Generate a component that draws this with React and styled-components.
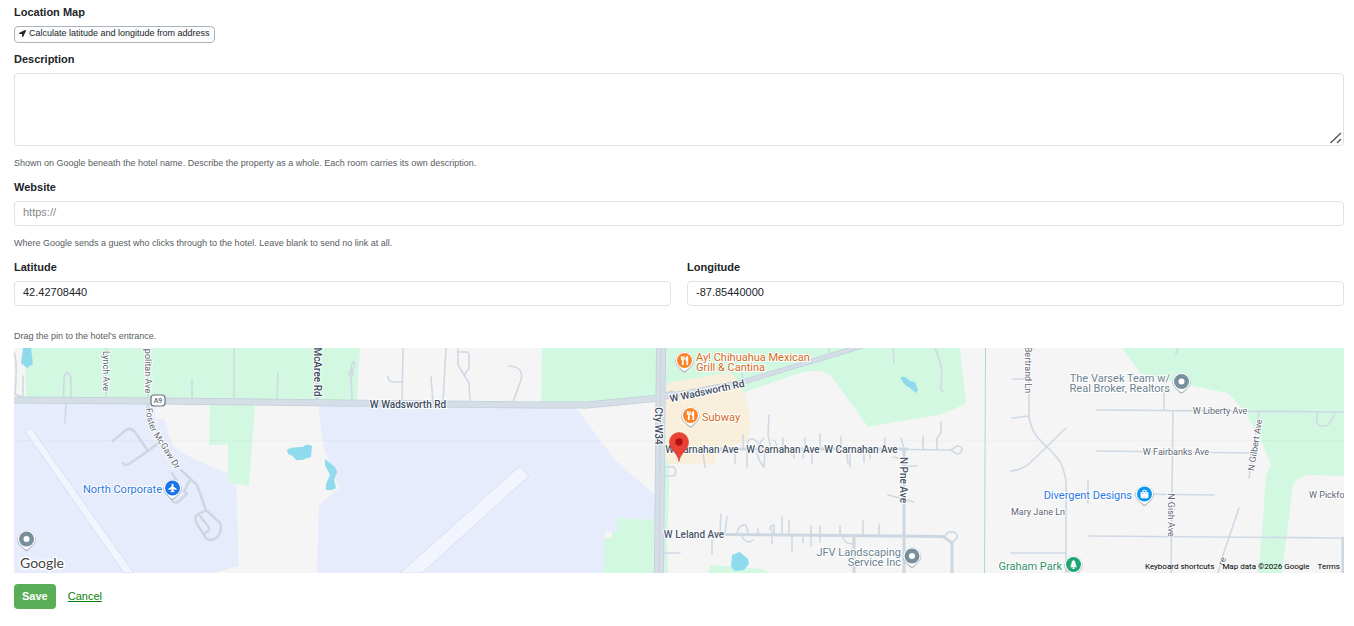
import styled, { createGlobalStyle } from 'styled-components'
import { FaLocationArrow, FaPlane, FaUtensils, FaTree, FaShoppingBag } from 'react-icons/fa'

const GlobalStyle = createGlobalStyle`
  *, *::before, *::after {
    box-sizing: border-box;
  }
  body {
    margin: 0;
    background: #fff;
    color: #212529;
    font-family: 'Liberation Sans', Arial, sans-serif;
    font-size: 11px;
    line-height: 16px;
  }
`

const Form = styled.form`
  padding: 4px 10px 16px 14px;
`

const Field = styled.div`
  display: flex;
  flex-direction: column;
  align-items: ${(props) => (props.$start ? 'flex-start' : 'stretch')};
  gap: 6px;
  flex: 1;
  margin-bottom: ${(props) => (props.$start ? '8px' : '9px')};
`

const Columns = styled.div`
  display: flex;
  gap: 16px;
`

const Label = styled.label`
  font-weight: 700;
`

const Title = styled.span`
  font-weight: 700;
`

const Help = styled.p`
  margin: ${(props) => (props.$map ? '14px 0 5px' : '4px 0 0')};
  color: #595c5f;
  font-size: 9px;
  line-height: 14px;
`

const Input = styled.input`
  width: 100%;
  height: 25px;
  padding: 2px 8px 6px;
  border: 1px solid #dee2e6;
  border-radius: 4px;
  background: #fff;
  color: #212529;
  font: inherit;
  line-height: 15px;
  &::placeholder {
    color: #85888b;
    opacity: 1;
  }
`

const TextAreaWrap = styled.div`
  position: relative;
`

const TextArea = styled.textarea`
  display: block;
  width: 100%;
  height: 73px;
  padding: 4px 8px;
  border: 1px solid #dee2e6;
  border-radius: 4px;
  font: inherit;
  resize: vertical;
  &::-webkit-resizer {
    display: none;
  }
`

const Grip = styled.svg`
  position: absolute;
  right: 2px;
  bottom: 2px;
  pointer-events: none;
`

const CalculateButton = styled.button`
  display: flex;
  align-items: center;
  gap: 3px;
  height: 17px;
  padding: 0 4px 3px;
  border: 1px solid #a9b4bf;
  border-radius: 4px;
  background: #fcfcfd;
  color: #212529;
  font: inherit;
  font-size: 9px;
  line-height: 12px;
`

const Actions = styled.div`
  display: flex;
  align-items: center;
  gap: 12px;
  margin-top: 11px;
`

const SaveButton = styled.button`
  height: 25px;
  padding: 0 8px 2px;
  border: 0;
  border-radius: 4px;
  background: #5aad57;
  color: #fff;
  font: inherit;
  font-weight: 700;
`

const CancelLink = styled.a`
  padding-bottom: 2px;
  color: #0a800a;
  text-decoration: underline;
`

const MapFrame = styled.div`
  position: relative;
  height: 225px;
  overflow: hidden;
  background: #f5f5f5;
`

const MapSvg = styled.svg`
  display: block;
  width: 100%;
  height: 100%;
  font-family: Roboto, sans-serif;
`

const MapFooter = styled.div`
  position: absolute;
  right: 0;
  bottom: 0;
  display: flex;
  gap: 8px;
  padding: 0 4px;
  color: #000;
  font-family: Roboto, sans-serif;
  font-size: 8px;
  line-height: 12px;
`

const FooterButton = styled.button`
  padding: 0;
  border: 0;
  background: none;
  color: inherit;
  font: inherit;
`

const FooterLink = styled.a`
  color: inherit;
  text-decoration: none;
`

const Halo = styled.text`
  fill: ${(props) => props.$color || '#5b6472'};
  font-size: ${(props) => props.$size || '9px'};
  font-weight: ${(props) => props.$weight || 400};
  stroke: #fff;
  stroke-width: 2px;
  stroke-linejoin: round;
  paint-order: stroke;
`

const Wordmark = styled(Halo)`
  font-family: Lato, sans-serif;
  stroke-width: 3px;
`

const GREEN = '#d3f8e2'
const AIRPORT = '#e7ecfd'
const WATER = '#90daee'

const AREAS = [
  { fill: AIRPORT, d: 'M14 402H155V419H164L172 445Q180 453 205 464L236 477L239 566L213 573H14Z' },
  { fill: AIRPORT, d: 'M318 404L321 430L324 448L339 488L319 505L317 573H603L605 538V532H617V518L655 520V495L616 461L576 408L560 405Z' },
  { fill: GREEN, d: 'M25 348H360L357 401L26 397Z' },
  { fill: GREEN, d: 'M210 403L255 404L249 486L228 482V444L209 445Z' },
  { fill: GREEN, d: 'M542 348H657V396L587 404H541Z' },
  { fill: GREEN, d: 'M617 518L655 520V573H603L605 538H612V532H617Z' },
  { fill: GREEN, d: 'M664 348H960L966 403Q952 411 937 415L868 427L832 377Q826 370 815 371Q804 371 797 374L743 393L666 400Z' },
  { fill: '#f8efdc', d: 'M668 383L731 372L741 386Q747 398 749 412Q751 428 748 440L715 452V464H668L665 455V392Z' },
  { fill: GREEN, d: 'M665 456L669 465V495L667 540L668 573H663Z' },
  { fill: GREEN, d: 'M710 565L763 569L768 573H708Z' },
  { fill: GREEN, d: 'M1122 348L1140 373L1183 384L1227 393Q1240 404 1247 415L1263 445L1271 465L1266 475L1263 518L1260 558L1257 573H1282L1293 485Q1296 478 1308 475L1344 476V348Z' },
  { fill: WATER, d: 'M23 348H31L33 364L27 368L21 363Z' },
  { fill: WATER, d: 'M287 450Q289 447 303 447Q306 443 312 446L311 457L302 460H296Q293 455 288 454Z' },
  { fill: WATER, d: 'M325 459L335 467L337 472L334 480L336 488L332 490L326 490V484L330 475L325 465Z' },
  { fill: WATER, d: 'M900 378Q903 375 907 378L910 381L915 382L918 390L916 393L910 388Q903 384 903 382Z' },
  { fill: WATER, d: 'M732 555L740 552L748 559L749 564L744 570L735 571L731 567Z' },
]

const RUNWAYS = [
  'M25.500 432L31 428L134 573H124Z',
  'M520 466L529 476L422 573H400Z',
]

const LANES = [
  'M14 352C18 362 16 380 15 394L24 398',
  'M23 376V398',
  'M63.500 398L64 378Q67 367 71 378V398',
  'M106 348V398M148 348V412M192 379V398M234 348V399M278 373L277 399M66 403L65 423',
  'M352 400L351 378C346 370 352 368 353 375M352 376C348 358 360 358 352 372',
  'M403 348L402 401M388 376Q388 382 393 382H402M431 377L433 403M446 348L443 401',
  'M458 348V365L469 383L470 402M459 352H466Q469 352 469 355V368L465 374',
  'M509 366C520 367 523 371 521 380L513 402',
  'M743 435V448M735 452V463M747 453V467M748 448C745 438 754 434 760 447M769 415L768 435L771 448M757 453Q759 462 764 467L765 450M764 438Q758 443 761 448M773 440Q776 440 777 448',
  'M783 438V448M794 453V458M805 438V448M812 453V463M820 434V448M803 452V458M841 437V448M847 453L848 464M850 453V467M864 453V462M870 453V458M885 438V448M901 438L904 449M923 436V449M941 422V430Q941 435 937 438V449M703 453L705 467',
  'M888 495L900 498L914 502M905 466H917M893 457L903 459',
  'M907 449.500L951 450L957 446Q962 446 962 450Q961 454 957 454L951 450',
  'M721 514L720 532M727 517L725 533M737 533Q739 524 746 525L748 532M742 537Q748 545 753 540M758 529V534M773 533Q767 526 774 525V533M782 517V533M789 520V533M792 537V551M772 537V544M803 537V543M811 526V546M820 526V542M840 526V535M863 521V535M879 524V536M712 540V554M665 553H680',
  'M843 537Q844 544 854 544M945 536Q947 531 953 532Q958 533 957 538L952 543',
  'M828 348L830 353M893 348L894 363M935 348C941 362 943 370 941 384Q940 391 944 392M742 372L743 379',
  'M665 467H672C677 467 677 476 672 476H665',
  'M1029 348V417C1032 434 1038 438 1047 447C1060 460 1062 462 1066 480V573',
  'M1013 379H1029M1012 418L1029 416M1066 428L1030 463Q1022 470 1011 471',
  'M1097 410L1344 412M1164 390V410M1173 411L1171 573M1097 451L1252 453M1259 412L1249 478',
  'M1088 481V503M1135 494L1214 495M1089 536L1344 538M1011 553H1066M1239 508L1223 555L1218 573',
  'M1318 413C1315 420 1317 426 1321 426H1326Q1330 425 1335 413M1178 348L1176 354',
]

const STREETS = [
  'M317 348V400M148 403V412',
  'M725 534.500L943 536.500L952 543V573M854 537V573M904 449V573M1343 538V573',
  'M668 449H907',
]

const SERVICE = [
  'M113 441L126 430Q131 427 135 432L148 451L157 444M148 451L129 464Q125 466 123 463',
  'M181 470L197 485L206 510L197 515Q194 518 197 524L206 538Q210 542 216 538Q223 532 220 523L206 510M200 516L208 526Q210 529 208 531L204 534',
  'M190 480L184 491L187 494L178 502Q173 504 171 498M172 473L177 481',
]

const HIGHWAYS = [
  { width: 5, d: 'M662 397L743 382L862 346' },
  { width: 7, d: 'M14 400L156 401L340 403L540 405H587L660 398L672 394' },
  { width: 10, d: 'M661 346L659 575' },
]

const ROAD_LABELS = [
  { text: 'Lynch Ave', x: 106, y: 371, rotate: 90 },
  { text: 'politan Ave', x: 148, y: 371, rotate: 90 },
  { text: 'McAree Rd', x: 317, y: 372, rotate: 90, major: true },
  { text: 'W Wadsworth Rd', x: 408, y: 404, major: true },
  { text: 'W Wadsworth Rd', x: 707, y: 391, rotate: -12, major: true },
  { text: 'Cty W34', x: 658, y: 426, rotate: 90, major: true },
  { text: 'W Carnahan Ave', x: 702, y: 449, street: true },
  { text: 'W Carnahan Ave', x: 783, y: 449, street: true },
  { text: 'W Carnahan Ave', x: 861, y: 449, street: true },
  { text: 'N Pne Ave', x: 903, y: 480, rotate: 90, street: true },
  { text: 'W Leland Ave', x: 694, y: 534, street: true },
  { text: 'Bertrand Ln', x: 1028, y: 370, rotate: 90 },
  { text: 'W Liberty Ave', x: 1220, y: 411 },
  { text: 'W Fairbanks Ave', x: 1176, y: 452 },
  { text: 'N Gilbert Ave', x: 1255, y: 445, rotate: -81 },
  { text: 'N Gish Ave', x: 1171, y: 515, rotate: 90 },
  { text: 'Mary Jane Ln', x: 1038, y: 512 },
  { text: 'W Pickfo', x: 1309, y: 495, anchor: 'start' },
  { text: 're', x: 1222, y: 561, rotate: -72 },
]

const PLACES = [
  { lines: ['North Corporate'], x: 162, y: 489, anchor: 'end', color: '#2b78e4', pin: [172.5, 488], fill: '#1a73e8', icon: FaPlane, turn: -90 },
  { lines: ['Ay! Chihuahua Mexican', 'Grill & Cantina'], x: 696, y: 357, color: '#d5691a', pin: [684.5, 360.5], fill: '#fb8429', icon: FaUtensils },
  { lines: ['Subway'], x: 702, y: 417, color: '#d5691a', pin: [690.5, 415.5], fill: '#fb8429', icon: FaUtensils },
  { lines: ['JFV Landscaping', 'Service Inc'], x: 901, y: 552, anchor: 'end', color: '#6c8290', pin: [912, 556], fill: '#78909c' },
  { lines: ['The Varsek Team w/', 'Real Broker, Realtors'], x: 1170, y: 378, anchor: 'end', color: '#6c8290', pin: [1181.5, 381.5], fill: '#78909c' },
  { lines: ['Divergent Designs'], x: 1132, y: 495, anchor: 'end', color: '#2b78e4', pin: [1144.5, 494], fill: '#0b95f5', icon: FaShoppingBag },
  { lines: ['Graham Park'], x: 1062, y: 566, anchor: 'end', color: '#2e9468', pin: [1073.5, 564.5], fill: '#1fa672', icon: FaTree },
  { lines: [], pin: [26.5, 539], fill: '#78909c' },
]

function RoadLabel({ text, x, y, rotate = 0, anchor = 'middle', major, street }) {
  return (
    <Halo
      x={x}
      y={y}
      dy="0.35em"
      textAnchor={anchor}
      transform={`rotate(${rotate} ${x} ${y})`}
      $size={major || street ? '10px' : '9px'}
      $weight={major || street ? 500 : 400}
      $color={major ? '#3c4a60' : street ? '#4a5669' : undefined}
    >
      {text}
    </Halo>
  )
}

function Place({ lines, x, y, anchor = 'start', color, pin, fill, icon: Icon, turn = 0 }) {
  return (
    <g>
      {lines.map((line, index) => (
        <Halo key={line} x={x} y={y + index * 10} dy="0.35em" textAnchor={anchor} $color={color} $size="11px">
          {line}
        </Halo>
      ))}
      <g transform={`translate(${pin[0]} ${pin[1]})`}>
        <path d="M-9.200 0.500A9.200 9.200 0 1 1 9.200 0.500C9.200 5.500 5 7.500 2 11Q0 13 -2 11C-5 7.500 -9.200 5.500 -9.200 0.500Z" fill="#a9b0ba" />
        <path d="M-8.700 0A8.700 8.700 0 1 1 8.700 0C8.700 5 4.500 7 1.800 9.800Q0 11.500 -1.800 9.800C-4.500 7 -8.700 5 -8.700 0Z" fill="#fff" />
        <circle r="7.500" fill={fill} />
        {Icon ? (
          <g transform={`rotate(${turn})`}>
            <Icon x="-4.5" y="-4.5" size={9} color="#fff" />
          </g>
        ) : (
          <circle r="3" fill="#fff" />
        )}
      </g>
    </g>
  )
}

function PropertyMap() {
  return (
    <MapFrame>
      <MapSvg viewBox="14 348 1330 225" preserveAspectRatio="xMidYMid slice" role="img" aria-label="Map">
        {AREAS.map((area) => <path key={area.d} d={area.d} fill={area.fill} />)}
        {RUNWAYS.map((d) => <path key={d} d={d} fill="#f3f5fe" stroke="#d9dff0" />)}
        <path d="M14 440.500H1344" stroke="#000" strokeOpacity="0.02" />
        <path d="M985.500 348L984.500 573" stroke="#a9dcc9" />
        <g fill="none" strokeLinecap="round" strokeLinejoin="round">
          {LANES.map((d) => <path key={d} d={d} stroke="#cfd9e5" strokeWidth="1.600" />)}
          {STREETS.map((d) => <path key={d} d={d} stroke="#cdd7e1" strokeWidth="3" />)}
          {SERVICE.map((d) => <path key={d} d={d} stroke="#cfd6e2" strokeWidth="2.500" />)}
          {HIGHWAYS.map((road) => <path key={road.d} d={road.d} stroke="#c2ceda" strokeWidth={road.width} />)}
          {HIGHWAYS.map((road) => <path key={road.d} d={road.d} stroke="#d5dee6" strokeWidth={road.width - 1.5} />)}
          <path d="M661 348L659 573" stroke="#c5d0db" strokeWidth="0.700" />
        </g>
        {ROAD_LABELS.map((label) => <RoadLabel key={`${label.text}-${label.x}`} {...label} />)}
        <path id="foster" d="M146 408C147 430 156 438 162 448L182 480" fill="none" />
        <Halo>
          <textPath href="#foster">Foster McGaw Dr</textPath>
        </Halo>
        <rect x="151" y="395" width="14" height="11" rx="3" fill="#fff" stroke="#687280" strokeWidth="1.200" />
        <Halo x="158" y="400.500" dy="0.35em" textAnchor="middle" $size="7px" $weight={500}>A9</Halo>
        {PLACES.map((place) => <Place key={place.pin.join()} {...place} />)}
        <path d="M679 461.500C678 453 669.500 450 669.500 442A9.500 9.500 0 1 1 688.500 442C688.500 450 680 453 679 461.500Z" fill="#ea4335" stroke="#d4382c" strokeWidth="0.600" />
        <circle cx="679" cy="442" r="3.700" fill="#b11313" />
        <Wordmark x="20" y="568" $size="14px" $color="#454545">Google</Wordmark>
      </MapSvg>
      <MapFooter>
        <FooterButton type="button">Keyboard shortcuts</FooterButton>
        <span>Map data ©2026 Google</span>
        <FooterLink href="#terms">Terms</FooterLink>
      </MapFooter>
    </MapFrame>
  )
}

export default function App() {
  return (
    <>
      <GlobalStyle />
      <Form>
        <Field $start>
          <Title>Location Map</Title>
          <CalculateButton type="button">
            <FaLocationArrow size={7} />
            Calculate latitude and longitude from address
          </CalculateButton>
        </Field>
        <Field>
          <Label htmlFor="description">Description</Label>
          <TextAreaWrap>
            <TextArea id="description" />
            <Grip width="12" height="12" viewBox="0 0 12 12" stroke="#555" strokeWidth="1.400" aria-hidden="true">
              <path d="M0.500 11L11 1M7 11L11 7" />
            </Grip>
          </TextAreaWrap>
          <Help>Shown on Google beneath the hotel name. Describe the property as a whole. Each room carries its own description.</Help>
        </Field>
        <Field>
          <Label htmlFor="website">Website</Label>
          <Input id="website" placeholder="https://" />
          <Help>Where Google sends a guest who clicks through to the hotel. Leave blank to send no link at all.</Help>
        </Field>
        <Columns>
          <Field>
            <Label htmlFor="latitude">Latitude</Label>
            <Input id="latitude" defaultValue="42.42708440" />
          </Field>
          <Field>
            <Label htmlFor="longitude">Longitude</Label>
            <Input id="longitude" defaultValue="-87.85440000" />
          </Field>
        </Columns>
        <Help $map>Drag the pin to the hotel's entrance.</Help>
        <PropertyMap />
        <Actions>
          <SaveButton type="submit">Save</SaveButton>
          <CancelLink href="#cancel">Cancel</CancelLink>
        </Actions>
      </Form>
    </>
  )
}
